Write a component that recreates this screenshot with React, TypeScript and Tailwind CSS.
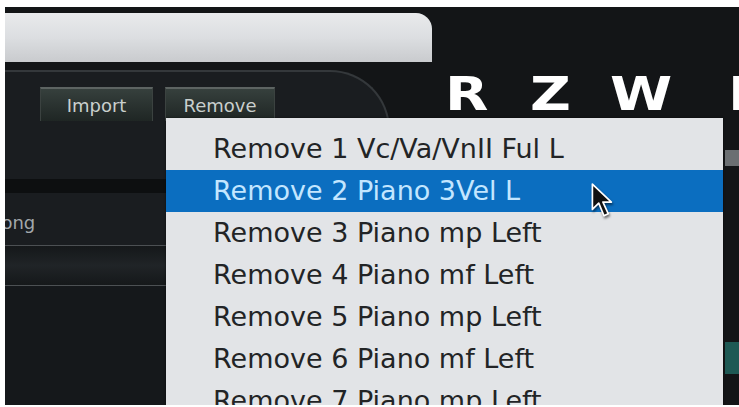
import { useState } from "react";

const items = [
  "Remove 1 Vc/Va/VnII Ful L",
  "Remove 2 Piano 3Vel L",
  "Remove 3 Piano mp Left",
  "Remove 4 Piano mf Left",
  "Remove 5 Piano mp Left",
  "Remove 6 Piano mf Left",
  "Remove 7 Piano mp Left",
];

const menuFont = { fontFamily: '"DejaVu Sans", "Liberation Sans", sans-serif' };

function PanelButton({ label, width }: { label: string; width: string }) {
  return (
    <button
      type="button"
      className={`${width} h-[34px] border-t-2 border-t-[#5d6462] border-x border-x-[#3b4240] bg-gradient-to-b from-[#36403d] to-[#1f2624] text-[18px] text-[#c9cfcd]`}
      style={menuFont}
    >
      {label}
    </button>
  );
}

function Cursor() {
  return (
    <svg width="28" height="38" viewBox="0 0 26 36" className="drop-shadow-[1px_2px_1px_rgba(0,0,0,0.5)]">
      <path d="M2 2 L2 26 L8 20 L13 32 L17 30 L12 19 L20 19 Z" fill="#111" stroke="#fff" strokeWidth="1.6" strokeLinejoin="round" />
    </svg>
  );
}

export default function App() {
  const [active] = useState(1);

  return (
    <div className="w-[739px] h-[407px] bg-white pl-[5px] pt-[7px] pb-[2px]">
      <div className="relative w-full h-full bg-[#131517] overflow-hidden flex flex-col">
        {/* header strip */}
        <div className="h-[55px] flex pt-[6px] shrink-0">
          <div className="w-[427px] h-[49px] rounded-tr-[16px] bg-gradient-to-b from-[#e9eaec] via-[#dcdee1] to-[#c9cbce]" />
          <div className="flex-1" />
        </div>

        <div className="flex flex-1 min-w-0">
          {/* left panel */}
          <div className="w-[385px] shrink-0 mt-[8px] rounded-tr-[60px] border-t-2 border-r-2 border-[#34383b] bg-[#1a1d20] flex flex-col">
            <div className="flex gap-[12px] pl-[35px] pt-[15px]">
              <PanelButton label="Import" width="w-[113px]" />
              <PanelButton label="Remove" width="w-[110px]" />
            </div>
            <div className="mt-[58px] h-[14px] bg-[#0d0f10]" />
            <div className="h-[52px] flex items-center pt-[6px] text-[18px] text-[#a3a8ab] -ml-[15px]" style={menuFont}>
              Song
            </div>
            <div className="h-px bg-[#4c5053]" />
            <div className="h-[39px] bg-gradient-to-b from-[#15181a] via-[#202427] to-[#15181a]" />
            <div className="h-px bg-[#4c5053]" />
            <div className="flex-1 bg-[#15181b]" />
          </div>

          {/* logo */}
          <div className="flex-1 min-w-0 overflow-hidden pt-[8px]">
            <div
              className="flex pl-[55px] text-[47px] font-black leading-none text-white"
              style={{ fontFamily: '"DejaVu Sans", sans-serif' }}
            >
              <span className="w-[85px] shrink-0 inline-block origin-left scale-x-[1.2]">R</span>
              <span className="w-[80px] shrink-0 inline-block origin-left scale-x-[1.2]">Z</span>
              <span className="w-[118px] shrink-0 inline-block origin-left scale-x-[1.2]">W</span>
              <span className="shrink-0 inline-block origin-left scale-x-[1.2]">E</span>
            </div>
          </div>
        </div>

        {/* right edge strip */}
        <div className="absolute right-0 top-[143px] w-[14px] h-[16px] bg-[#6b6f72]" />
        <div className="absolute right-0 top-[335px] w-[14px] h-[32px] bg-[#1e5954]" />

        {/* dropdown menu */}
        <div
          className="absolute left-[161px] top-[111px] w-[557px] bottom-0 bg-[#e2e4e7] pt-[10px] shadow-[0_0_2px_rgba(0,0,0,0.6)]"
          style={menuFont}
        >
          {items.map((item, i) => (
            <div
              key={item}
              className={
                i === active
                  ? "relative h-[42px] flex items-center pl-[47px] text-[27px] bg-[#0b6ec0] text-[#c3e6ff]"
                  : "h-[42px] flex items-center pl-[47px] text-[27px] text-[#222426]"
              }
            >
              {item}
              {i === active && (
                <div className="absolute left-[424px] top-[12px]">
                  <Cursor />
                </div>
              )}
            </div>
          ))}
        </div>
      </div>
    </div>
  );
}
